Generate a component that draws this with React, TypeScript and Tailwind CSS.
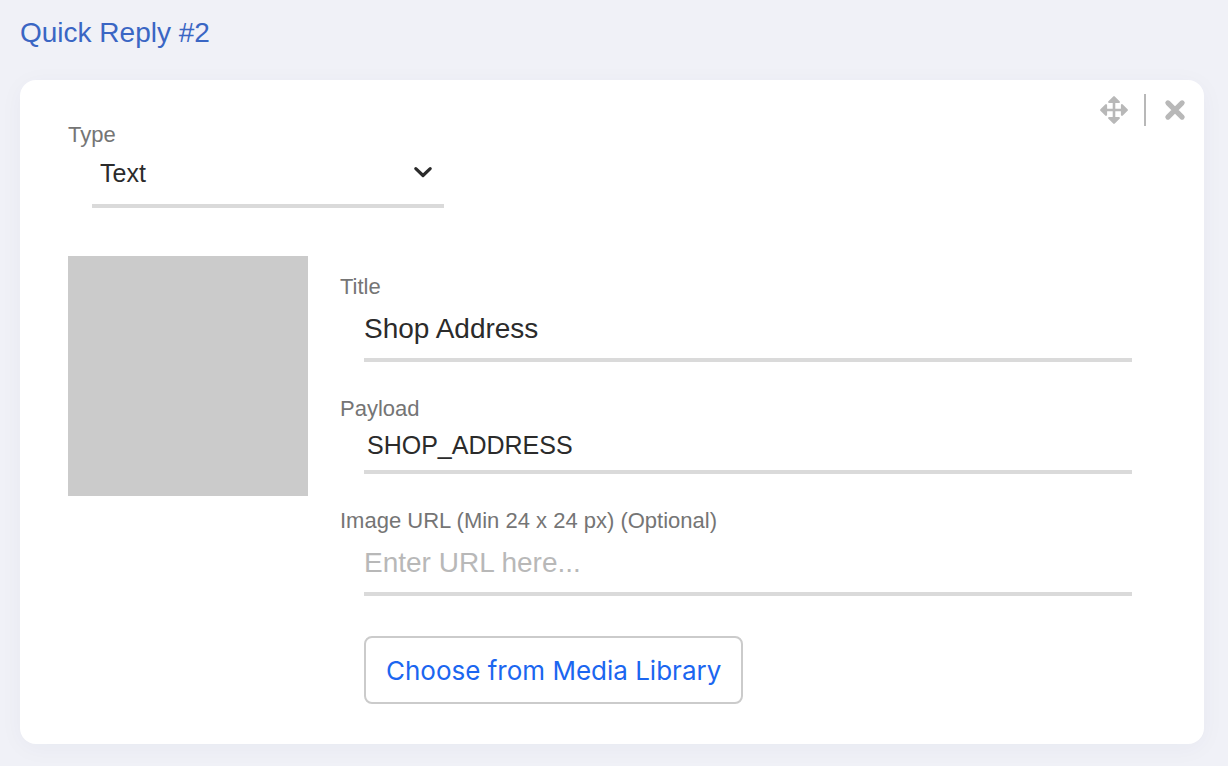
import { useState } from "react";

const labelClass = "block text-[22px] leading-[26px] text-[#757575]";
const fieldClass =
  "ml-6 block border-b-4 border-[#dadada] bg-transparent text-[#2b2b2b] outline-none placeholder:text-[#b8b8b8] placeholder:opacity-100";

function MoveIcon() {
  return (
    <svg viewBox="0 0 28 28" className="size-7" fill="currentColor" aria-hidden="true">
      <path d="M12.7 5h2.6v18h-2.6zM5 12.7h18v2.6H5z" />
      <path
        d="M14 1.2 18.8 6H9.2zM14 26.8 9.2 22h9.6zM1.2 14 6 9.2v9.6zM26.8 14 22 18.8V9.2z"
        stroke="currentColor"
        strokeWidth="2.2"
        strokeLinejoin="round"
      />
    </svg>
  );
}

function RemoveIcon() {
  return (
    <svg
      viewBox="0 0 28 28"
      className="size-7"
      stroke="currentColor"
      strokeWidth="5.2"
      strokeLinecap="round"
      aria-hidden="true"
    >
      <path d="M5.9 6.9 20.1 21.1M20.1 6.9 5.9 21.1" />
    </svg>
  );
}

export default function App() {
  const [type, setType] = useState("text");
  const [title, setTitle] = useState("Shop Address");
  const [payload, setPayload] = useState("SHOP_ADDRESS");
  const [url, setUrl] = useState("");

  return (
    <main className="min-h-screen bg-[#f0f1f7] pt-3 pr-6 pb-5 pl-5 font-['Liberation_Sans',Arial,sans-serif]">
      <h2 className="text-[28px] leading-[42px] text-[#3a66c4]">Quick Reply #2</h2>

      <section className="mt-[26px] rounded-2xl bg-white pt-3.5 pr-3.5 pb-10 pl-12 shadow-[0_4px_24px_rgba(30,40,90,0.04)]">
        <header className="flex items-start justify-between">
          <div className="pt-7">
            <label htmlFor="type" className={labelClass}>
              Type
            </label>
            <div className="relative">
              <select
                id="type"
                value={type}
                onChange={(e) => setType(e.target.value)}
                className={`${fieldClass} h-15 w-88 appearance-none pb-1 pl-2 text-[25px]`}
              >
                <option value="text">Text</option>
                <option value="location">Location</option>
              </select>
              <svg
                viewBox="0 0 20 12"
                className="pointer-events-none absolute top-[18px] right-[11px] h-3 w-5"
                fill="none"
                stroke="#2b2b2b"
                strokeWidth="3.2"
                strokeLinecap="round"
                strokeLinejoin="round"
                aria-hidden="true"
              >
                <path d="M2.8 2.7 10 9.5 17.2 2.7" />
              </svg>
            </div>
          </div>

          <div className="flex h-8 items-center gap-4 text-[#b8b8b8]">
            <button type="button" aria-label="Move">
              <MoveIcon />
            </button>
            <span className="h-8 w-0.5 bg-[#b8b8b8]" />
            <button type="button" aria-label="Remove">
              <RemoveIcon />
            </button>
          </div>
        </header>

        <div className="mt-12 flex items-start gap-8 pr-[58px]">
          <div className="size-60 shrink-0 bg-[#cbcbcb]" />

          <div className="min-w-0 flex-1 pt-[18px]">
            <label htmlFor="title" className={labelClass}>
              Title
            </label>
            <input
              id="title"
              value={title}
              onChange={(e) => setTitle(e.target.value)}
              className={`${fieldClass} h-[62px] w-[calc(100%-24px)] text-[28px]`}
            />

            <label htmlFor="payload" className={`${labelClass} mt-[34px]`}>
              Payload
            </label>
            <input
              id="payload"
              value={payload}
              onChange={(e) => setPayload(e.target.value)}
              className={`${fieldClass} h-13 w-[calc(100%-24px)] pb-0.5 pl-[3px] text-[25px]`}
            />

            <label htmlFor="url" className={`${labelClass} mt-[34px]`}>
              Image URL (Min 24 x 24 px) (Optional)
            </label>
            <input
              id="url"
              value={url}
              placeholder="Enter URL here..."
              onChange={(e) => setUrl(e.target.value)}
              className={`${fieldClass} h-[62px] w-[calc(100%-24px)] text-[28px]`}
            />

            <button
              type="button"
              className="mt-10 ml-6 block h-17 rounded-lg border-2 border-[#cbcbcb] bg-white px-5 font-[Inter,sans-serif] text-[26px] text-[#1b66f0]"
            >
              Choose from Media Library
            </button>
          </div>
        </div>
      </section>
    </main>
  );
}
